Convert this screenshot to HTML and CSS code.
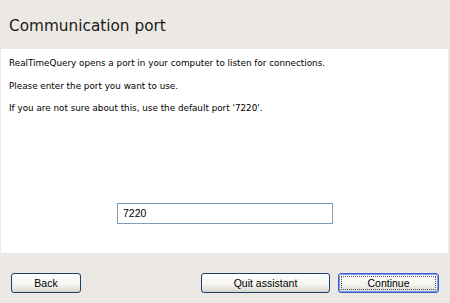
FILE: index.html
```html
<!DOCTYPE html>
<html>
<head>
<meta charset="utf-8">
<link rel="stylesheet" href="styles.css">
</head>
<body>
<div class="window">
  <div class="header"><h1 class="title">Communication port</h1></div>
  <div class="panel">
    <p class="line">RealTimeQuery opens a port in your computer to listen for connections.</p>
    <p class="line">Please enter the port you want to use.</p>
    <p class="line">If you are not sure about this, use the default port '7220'.</p>
    <div class="field-row"><input class="port" type="text" value="7220"></div>
  </div>
  <div class="footer">
    <button class="btn btn-back">Back</button>
    <div class="spacer"></div>
    <button class="btn btn-quit">Quit assistant</button>
    <button class="btn btn-continue"><span class="focus">Continue</span></button>
  </div>
</div>
</body>
</html>
```

FILE: styles.css
```css
html, body {
  margin: 0;
  padding: 0;
  background: #ece9e4;
}
.window {
  width: 450px;
  height: 303px;
  display: flex;
  flex-direction: column;
  background: #ece9e4;
}
.header {
  height: 49px;
  display: flex;
  align-items: center;
  padding: 3px 0 0 9px;
  box-sizing: border-box;
}
.title {
  margin: 0;
  font-family: "DejaVu Sans", sans-serif;
  font-weight: normal;
  font-size: 15.3px;
  color: #1a1a1a;
}
.panel {
  height: 204px;
  margin: 0 2px 0 1px;
  background: #ffffff;
  box-sizing: border-box;
  padding: 9px 8px 0 8px;
  display: flex;
  flex-direction: column;
}
.line {
  margin: 0 0 11.5px 0;
  font-family: "DejaVu Sans", sans-serif;
  font-size: 8.8px;
  line-height: 11px;
  color: #000;
}
.field-row {
  margin-top: 77px;
  padding-left: 108px;
}
.port {
  width: 216px;
  height: 21px;
  box-sizing: border-box;
  border: 1px solid #7f9db9;
  padding: 0 0 0 5px;
  font-family: "Liberation Sans", sans-serif;
  font-size: 10.5px;
  color: #000;
  outline: none;
}
.footer {
  flex: 1;
  display: flex;
  align-items: flex-start;
  padding: 20px 11px 0 11px;
  box-sizing: border-box;
}
.spacer { flex: 1; }
.btn {
  height: 20px;
  box-sizing: border-box;
  border: 1px solid #1c3f6e;
  border-radius: 3px;
  background: linear-gradient(#ffffff, #f4f4f0 60%, #d8d5cc);
  font-family: "Liberation Sans", sans-serif;
  font-size: 10.5px;
  color: #000;
  padding: 0;
}
.btn-back { width: 70px; }
.btn-quit { width: 129px; }
.btn-continue {
  width: 101px;
  margin-left: 8px;
  border-color: #3a5fcd;
  box-shadow: inset 0 0 0 1px #7d9ce6;
  padding: 2px;
}
.focus {
  display: block;
  height: 100%;
  border: 1px dotted #555;
  box-sizing: border-box;
  line-height: 12px;
}
```
